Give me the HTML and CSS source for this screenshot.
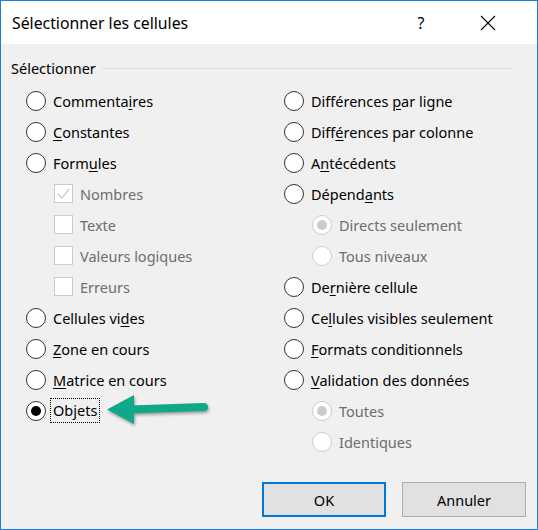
FILE: index.html
```html
<!DOCTYPE html>
<html lang="fr">
<head>
<meta charset="utf-8">
<title>Sélectionner les cellules</title>
<link rel="stylesheet" href="styles.css">
</head>
<body>
<div class="window">
  <div class="titlebar">
    <span class="title">Sélectionner les cellules</span>
    <span class="help">?</span>
    <span class="close"><svg width="16" height="16" viewBox="0 0 16 16"><path d="M1 1 L15 15 M15 1 L1 15" stroke="#000" stroke-width="1.1" fill="none"/></svg></span>
  </div>
  <div class="content">
    <div class="group-header"><span>Sélectionner</span><span class="line"></span></div>
    <div class="columns">
      <div class="col">
        <div class="row"><span class="radio"></span><span>Commenta<u>i</u>res</span></div>
        <div class="row"><span class="radio"></span><span><u>C</u>onstantes</span></div>
        <div class="row"><span class="radio"></span><span>Form<u>u</u>les</span></div>
        <div class="row sub disabled"><span class="check checked"><svg width="17" height="17" viewBox="0 0 17 17"><path d="M3 9 L7 13 L14 4" stroke="#cccccc" stroke-width="1.3" fill="none"/></svg></span><span>Nombres</span></div>
        <div class="row sub disabled"><span class="check"></span><span>Texte</span></div>
        <div class="row sub disabled"><span class="check"></span><span>Valeurs logiques</span></div>
        <div class="row sub disabled"><span class="check"></span><span>Erreurs</span></div>
        <div class="row"><span class="radio"></span><span>Cellules vi<u>d</u>es</span></div>
        <div class="row"><span class="radio"></span><span><u>Z</u>one en cours</span></div>
        <div class="row"><span class="radio"></span><span><u>M</u>atrice en cours</span></div>
        <div class="row"><span class="radio on"></span><span class="focus">Objets</span></div>
      </div>
      <div class="col">
        <div class="row"><span class="radio"></span><span>Différences <u>p</u>ar ligne</span></div>
        <div class="row"><span class="radio"></span><span>Diff<u>é</u>rences par colonne</span></div>
        <div class="row"><span class="radio"></span><span>A<u>n</u>técédents</span></div>
        <div class="row"><span class="radio"></span><span>Dépend<u>a</u>nts</span></div>
        <div class="row sub disabled"><span class="radio on"></span><span>Directs seulement</span></div>
        <div class="row sub disabled"><span class="radio"></span><span>Tous niveaux</span></div>
        <div class="row"><span class="radio"></span><span>De<u>r</u>nière cellule</span></div>
        <div class="row"><span class="radio"></span><span>Ce<u>l</u>lules visibles seulement</span></div>
        <div class="row"><span class="radio"></span><span><u>F</u>ormats conditionnels</span></div>
        <div class="row"><span class="radio"></span><span><u>V</u>alidation des données</span></div>
        <div class="row sub disabled"><span class="radio on"></span><span>Toutes</span></div>
        <div class="row sub disabled"><span class="radio"></span><span>Identiques</span></div>
      </div>
    </div>
    <div class="buttons">
      <button class="btn default">OK</button>
      <button class="btn">Annuler</button>
    </div>
    <svg class="arrow" width="120" height="45" viewBox="0 0 120 45">
      <line x1="30" y1="20.5" x2="104" y2="18" stroke="#0fa98a" stroke-width="8" stroke-linecap="round"/>
      <polygon points="7,20.5 34,6 34,35" fill="#0fa98a"/>
    </svg>
  </div>
</div>
</body>
</html>
```

FILE: styles.css
```css
* { box-sizing: border-box; }
html, body { margin: 0; padding: 0; background: #fff; }
body {
  font-family: "Noto Sans", "Open Sans", sans-serif;
  font-size: 14.5px;
  color: #000;
}
.window {
  width: 538px;
  height: 530px;
  border: 1px solid #1a7fd5;
  background: #f0f0f0;
  display: flex;
  flex-direction: column;
}
.titlebar {
  height: 43px;
  background: #fff;
  display: flex;
  align-items: center;
  padding-left: 11px;
  font-size: 15.8px;
}
.title { flex: 1; }
.help {
  width: 30px;
  text-align: center;
  margin-right: 44px;
  font-size: 16px;
}
.close {
  width: 16px;
  height: 16px;
  margin-right: 41px;
  display: flex;
}
.content {
  flex: 1;
  display: flex;
  flex-direction: column;
  position: relative;
}
.group-header {
  display: flex;
  align-items: center;
  gap: 6px;
  height: 20px;
  margin: 14px 25px 0 10px;
}
.group-header .line {
  flex: 1;
  height: 1px;
  background: #dcdcdc;
}
.columns {
  display: grid;
  grid-template-columns: 258px 1fr;
  padding-left: 25px;
  margin-top: 7px;
}
.col { display: flex; flex-direction: column; }
.row {
  height: 31px;
  display: flex;
  align-items: center;
  gap: 7px;
  white-space: nowrap;
}
.row.sub { padding-left: 28px; }
.row.disabled { color: #6d6d6d; }
u { text-underline-offset: 2px; text-decoration-thickness: 1px; }
.radio {
  width: 20px;
  height: 20px;
  border: 1px solid #333;
  border-radius: 50%;
  background: #fff;
  display: flex;
  align-items: center;
  justify-content: center;
  flex: none;
}
.radio.on::after {
  content: "";
  width: 10px;
  height: 10px;
  border-radius: 50%;
  background: #000;
}
.disabled .radio { border-color: #cccccc; }
.disabled .radio.on::after { background: #cccccc; }
.check {
  width: 19px;
  height: 19px;
  border: 1px solid #cccccc;
  background: #fff;
  flex: none;
  display: flex;
}
.focus {
  border: 1px dotted #000;
  margin-left: -3px;
  padding: 1px 2px 2px 2px;
}
.buttons {
  margin-top: auto;
  display: flex;
  justify-content: flex-end;
  gap: 16px;
  padding: 0 11px 12px 0;
}
.btn {
  width: 124px;
  height: 35px;
  background: #e1e1e1;
  border: 1px solid #adadad;
  font-family: inherit;
  font-size: 14.5px;
  color: #000;
  padding: 0;
}
.btn.default { border: 2px solid #0078d7; }
.arrow {
  position: absolute;
  left: 99px;
  top: 345px;
  filter: drop-shadow(1px 2px 1.5px rgba(0,0,0,0.35));
}
```
